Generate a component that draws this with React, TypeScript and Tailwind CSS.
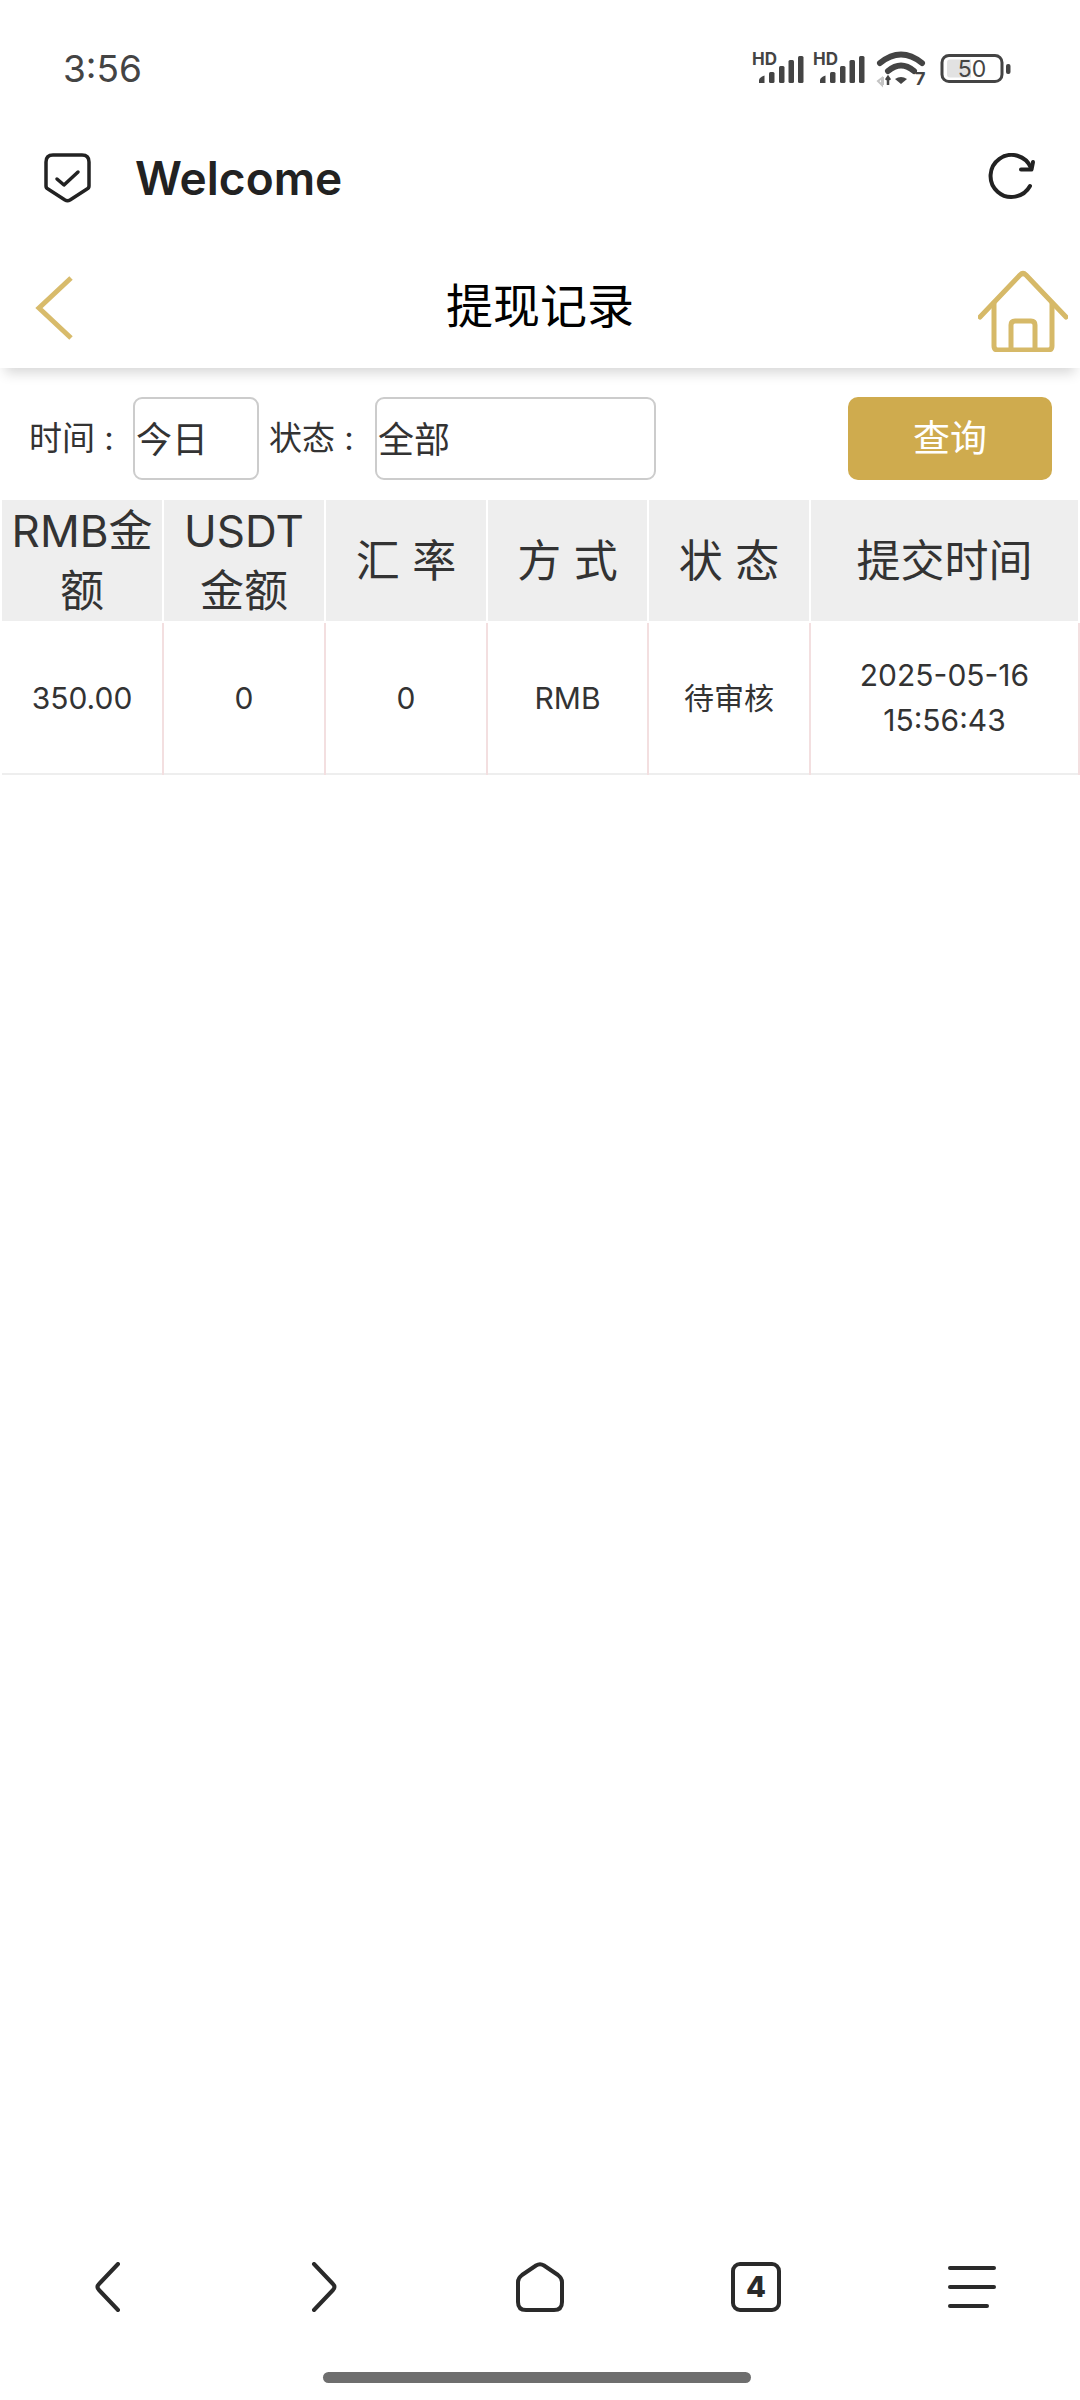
import React from 'react';

const cjk = "font-['Inter','Noto_Sans_CJK_SC',sans-serif]";

const SignalIcon: React.FC = () => (
  <svg width="52" height="42" viewBox="0 -8 52 42" fill="#444" className="mt-[-8px]">
    <text x="0" y="13" fontSize="17" fontWeight="700" fontFamily="Inter, sans-serif">HD</text>
    <path d="M7 31v-3q0-2 3-3.500l2.500-1v7.500z" />
    <rect x="17" y="20" width="5.500" height="11" rx="1.500" />
    <rect x="27" y="14" width="5.500" height="17" rx="1.500" />
    <rect x="36.500" y="8" width="5.500" height="23" rx="1.500" />
    <rect x="46" y="4" width="5.500" height="27" rx="1.500" />
  </svg>
);

const WifiIcon: React.FC = () => (
  <svg width="52" height="42" viewBox="0 0 52 42" fill="none">
    <path d="M5 15Q26 -2 47 15" stroke="#444" strokeWidth="6" strokeLinecap="round" />
    <path d="M13 23Q26 12 39 23" stroke="#444" strokeWidth="6" strokeLinecap="round" />
    <path d="M20 31Q26 27 32 31L26 36z" fill="#444" />
    <path d="M3 33l4-3v7zM8 29v8" stroke="#c4c4c4" strokeWidth="2" />
    <path d="M13 37v-7M11 32l2-3 2 3" stroke="#444" strokeWidth="2.500" />
    <text x="40" y="37" fontSize="18" fontWeight="700" fill="#444" fontFamily="Inter, sans-serif">7</text>
  </svg>
);

const BatteryIcon: React.FC = () => (
  <svg width="71" height="30" viewBox="0 0 71 30">
    <rect x="2" y="1.500" width="60" height="26" rx="7" fill="none" stroke="#444" strokeWidth="3" />
    <path d="M10 5.500h21v18h-21q-3 0-3-3v-12q0-3 3-3z" fill="#e2e2e2" />
    <text x="32" y="23" fontSize="23" textAnchor="middle" fill="#444" fontFamily="Inter, sans-serif">50</text>
    <rect x="66" y="10" width="4.500" height="10" rx="2" fill="#444" />
  </svg>
);

const ShieldIcon: React.FC = () => (
  <svg width="47" height="50" viewBox="0 0 47 50" fill="none" stroke="#222" strokeWidth="3.500" strokeLinecap="round" strokeLinejoin="round">
    <path d="M9 2H38Q45 2 45 9V33Q45 35 43 36L26 47Q23.500 48.500 21 47L4 36Q2 35 2 33V9Q2 2 9 2Z" />
    <path d="M13 26L20 32L34 19" />
  </svg>
);

const RefreshIcon: React.FC = () => (
  <svg width="50" height="50" viewBox="0 0 50 50" fill="none" stroke="#222" strokeWidth="4" strokeLinecap="round" strokeLinejoin="round">
    <path d="M44 33A21 21 0 1 1 45 15" />
    <path d="M35 16.500H45.500L47 9" />
  </svg>
);

const BackIcon: React.FC = () => (
  <svg width="38" height="64" viewBox="0 0 38 64" fill="none" stroke="#d8bb6b" strokeWidth="5" className="mt-[4px]">
    <path d="M36 2L4 32L36 62" />
  </svg>
);

const GoldHome: React.FC = () => (
  <svg width="90" height="82" viewBox="0 0 90 82" fill="none" stroke="#d6b968" strokeWidth="5" strokeLinecap="round" strokeLinejoin="round" className="mt-[10px]">
    <path d="M2 47L42 5Q45 2 48 5L88 47" />
    <path d="M16 33V76Q16 80 20 80H70Q74 80 74 76V33" />
    <path d="M33 79V55Q33 51 37 51H53Q57 51 57 55V79" />
  </svg>
);

const NavIcon: React.FC<{ children: React.ReactNode }> = ({ children }) => (
  <svg width="48" height="50" viewBox="0 0 48 50" fill="none" stroke="#2a2a2a" strokeWidth="4" strokeLinecap="round" strokeLinejoin="round">
    {children}
  </svg>
);

const headers = ['RMB金额', 'USDT金额', '汇 率', '方 式', '状 态', '提交时间'];

const cellClass = 'h-[152px] border-b-2 border-b-[#eee] p-0 shadow-[2px_0_0_#f3dfe0]';

const App: React.FC = () => {
  return (
    <div className={`flex h-[2400px] w-[1080px] flex-col overflow-hidden bg-white ${cjk}`}>
      {/* status bar */}
      <div className="flex h-[138px] items-center justify-between pl-[63px] pr-[69px]">
        <span className="text-[37px] text-[#444]">3:56</span>
        <div className="flex items-center">
          <SignalIcon />
          <div className="ml-[9px]"><SignalIcon /></div>
          <div className="ml-[10px]"><WifiIcon /></div>
          <div className="ml-[13px]"><BatteryIcon /></div>
        </div>
      </div>

      {/* browser bar */}
      <div className="flex h-[80px] items-center justify-between pl-[44px] pr-[44px]">
        <div className="flex items-center">
          <ShieldIcon />
          <span className="ml-[44px] text-[46px] font-semibold text-[#222]">Welcome</span>
        </div>
        <RefreshIcon />
      </div>

      {/* page header */}
      <div className="relative z-10 mt-[26px] grid h-[124px] grid-cols-[1fr_auto_1fr] items-center bg-white pl-[35px] pr-[12px] shadow-[0_10px_12px_-5px_rgba(0,0,0,0.16)]">
        <BackIcon />
        <span className="mr-[23px] text-[47px] font-normal text-black">提现记录</span>
        <div className="flex justify-end"><GoldHome /></div>
      </div>

      {/* filters */}
      <div className="mt-[29px] flex h-[83px] items-center text-[33px] text-[#333]">
        <span className="ml-[29px] w-[104px]">时间 :</span>
        <input readOnly value="今日" className="h-[83px] w-[126px] rounded-[9px] border-2 border-[#ccc] pb-[4px] pl-[1px] text-[36px] outline-none" />
        <span className="ml-[10px] w-[106px]">状态 :</span>
        <input readOnly value="全部" className="h-[83px] w-[281px] rounded-[9px] border-2 border-[#ccc] pb-[4px] pl-[1px] text-[36px] outline-none" />
        <button className="ml-[192px] h-[83px] w-[204px] rounded-[10px] bg-[#cfab4e] text-[37px] text-white">查询</button>
      </div>

      {/* records */}
      <table className="mt-[18px] w-[1080px] table-fixed border-separate border-spacing-[2px] text-[#333]">
        <colgroup>
          <col className="w-[160px]" />
          <col className="w-[160px]" />
          <col className="w-[160px]" />
          <col className="w-[159px]" />
          <col className="w-[160px]" />
          <col />
        </colgroup>
        <thead>
          <tr>
            {headers.map((h) => (
              <th key={h} className="h-[121px] bg-[#eee] p-0 text-[44px] font-normal leading-[60px]">{h}</th>
            ))}
          </tr>
        </thead>
        <tbody className="text-center text-[30px] leading-[45px]">
          <tr>
            <td className={cellClass}>350.00</td>
            <td className={cellClass}>0</td>
            <td className={cellClass}>0</td>
            <td className={cellClass}>RMB</td>
            <td className={cellClass}>待审核</td>
            <td className={cellClass}>2025-05-16<br />15:56:43</td>
          </tr>
        </tbody>
      </table>

      <div className="flex-1" />

      {/* browser nav */}
      <div className="grid grid-cols-5 justify-items-center">
        <NavIcon><path d="M34 2L15 22Q12 25 15 28L34 48" /></NavIcon>
        <NavIcon><path d="M14 2L33 22Q36 25 33 28L14 48" /></NavIcon>
        <NavIcon><path d="M20 3.500Q24 1 28 3.500L42 13Q46 16 46 20V40Q46 48 38 48H10Q2 48 2 40V20Q2 16 6 13Z" /></NavIcon>
        <div className="flex h-[50px] w-[50px] items-center justify-center rounded-[9px] border-[4px] border-[#2a2a2a] text-[29px] font-extrabold text-[#2a2a2a]">4</div>
        <NavIcon>
          <path d="M2 6H46" />
          <path d="M2 25H46" />
          <path d="M2 44H39" />
        </NavIcon>
      </div>

      <div className="ml-[323px] mb-[17px] mt-[60px] h-[11px] w-[428px] rounded-full bg-[#6e6e6e]" />
    </div>
  );
};

export default App;
